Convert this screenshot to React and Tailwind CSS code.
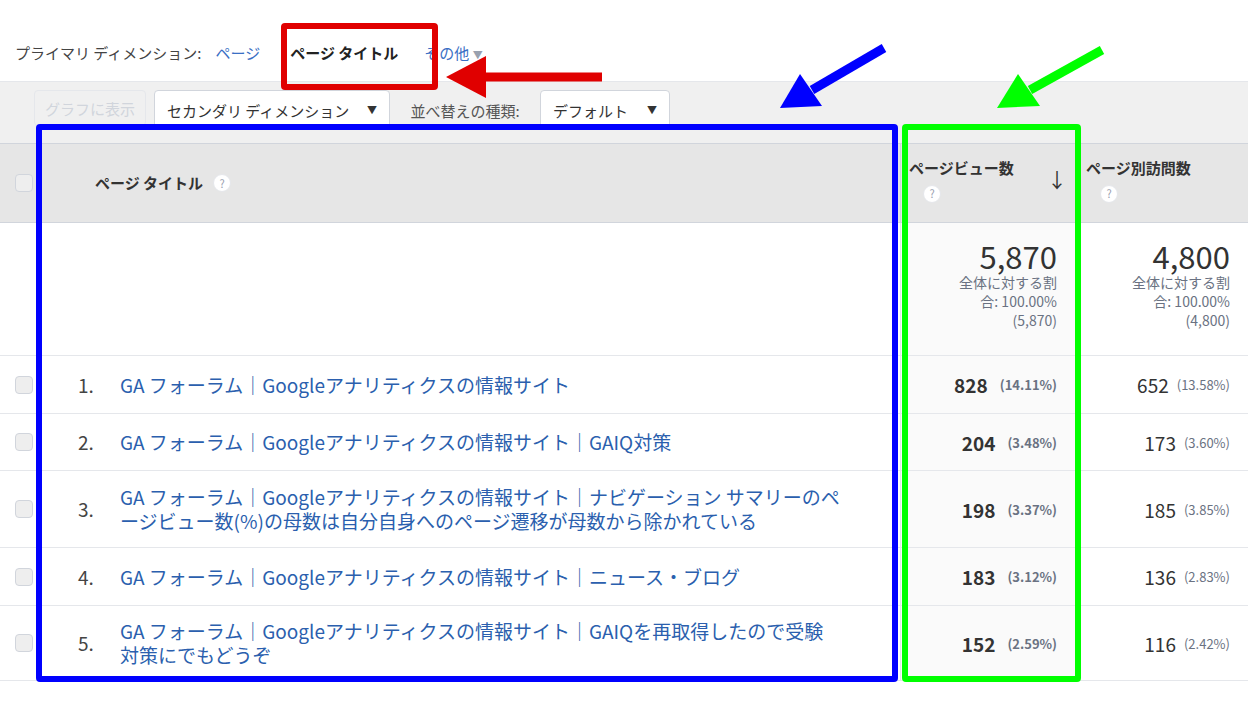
import React from 'react';

const rows = [
  { n: '1.', t: ['GA フォーラム｜Googleアナリティクスの情報サイト'], pv: '828', pp: '(14.11%)', uv: '652', up: '(13.58%)', h: 'h-[58px]' },
  { n: '2.', t: ['GA フォーラム｜Googleアナリティクスの情報サイト｜GAIQ対策'], pv: '204', pp: '(3.48%)', uv: '173', up: '(3.60%)', h: 'h-[57px]' },
  { n: '3.', t: ['GA フォーラム｜Googleアナリティクスの情報サイト｜ナビゲーション サマリーのペ', 'ージビュー数(%)の母数は自分自身へのページ遷移が母数から除かれている'], pv: '198', pp: '(3.37%)', uv: '185', up: '(3.85%)', h: 'h-[77px]' },
  { n: '4.', t: ['GA フォーラム｜Googleアナリティクスの情報サイト｜ニュース・ブログ'], pv: '183', pp: '(3.12%)', uv: '136', up: '(2.83%)', h: 'h-[58px]' },
  { n: '5.', t: ['GA フォーラム｜Googleアナリティクスの情報サイト｜GAIQを再取得したので受験', '対策にでもどうぞ'], pv: '152', pp: '(2.59%)', uv: '116', up: '(2.42%)', h: 'h-[75px]' },
];

const Help = () => (
  <span className="inline-flex w-[18px] h-[18px] rounded-full bg-white border border-gray-200 text-[11px] leading-none text-gray-400 items-center justify-center font-normal">?</span>
);

export default function App() {
  return (
    <div className="relative w-[1248px] h-[702px] bg-white text-[#333] leading-normal" style={{ fontFamily: '"Noto Sans CJK JP", "Liberation Sans", sans-serif' }}>
      <div className="pt-[23px]">
        <div className="h-[58px] flex items-center pl-[15px] text-[15px] leading-none">
          <span className="text-[#444]">プライマリ ディメンション:</span>
          <span className="text-[#3a6fc4] ml-[14px]">ページ</span>
          <span className="font-bold ml-[30px] text-[#222]">ページ タイトル</span>
          <span className="text-[#3a6fc4] ml-[26px]">その他 <span className="text-gray-400 text-[10px]">▼</span></span>
        </div>
        <div className="h-[62px] bg-[#f0f0f0] border-t border-gray-200 flex items-start pt-[8px] pl-[34px] text-[15px] leading-none">
          <div className="h-[36px] w-[112px] border border-gray-200 rounded flex items-center justify-center text-gray-300">グラフに表示</div>
          <div className="h-[40px] w-[236px] ml-[8px] px-[12px] bg-white border border-gray-300 rounded flex items-center justify-between">セカンダリ ディメンション <span className="text-[10px]">▼</span></div>
          <div className="h-[40px] w-[150px] flex items-center justify-center text-[#555]">並べ替えの種類:</div>
          <div className="h-[40px] w-[130px] px-[12px] bg-white border border-gray-300 rounded flex items-center justify-between">デフォルト <span className="text-[10px]">▼</span></div>
        </div>
        <div className="grid grid-cols-[45px_855px_180px_168px]">
          <div className="h-[80px] bg-[#e6e6e6] border-y border-gray-300 flex items-center pl-[15px]"><span className="w-[18px] h-[18px] border border-gray-300 bg-[#eee] rounded-sm" /></div>
          <div className="h-[80px] bg-[#e6e6e6] border-y border-gray-300 flex items-center pl-[50px] gap-[10px] text-[15px] font-bold">ページ タイトル <Help /></div>
          <div className="h-[80px] bg-[#e6e6e6] border-y border-x border-gray-300 pl-[8px] pr-[12px] pt-[14px] text-[15px] leading-[20px] font-bold relative">
            ページビュー数
            <div className="mt-[6px] ml-[14px] leading-none"><Help /></div>
            <span className="absolute right-[12px] top-[26px] text-[20px] font-normal">↓</span>
          </div>
          <div className="h-[80px] bg-[#e6e6e6] border-y border-gray-300 pl-[6px] pt-[14px] text-[15px] leading-[20px] font-bold">
            ページ別訪問数
            <div className="mt-[6px] ml-[14px] leading-none"><Help /></div>
          </div>

          <div className="h-[133px] border-b border-gray-200" />
          <div className="h-[133px] border-b border-gray-200" />
          <div className="h-[133px] border-b border-x border-gray-200 text-right pr-[22px] pt-[16px] bg-[#fafafa]">
            <div className="text-[31px] leading-[34px]">5,870</div>
            <div className="text-[14px] leading-[19px] text-gray-500">全体に対する割<br />合: 100.00%<br />(5,870)</div>
          </div>
          <div className="h-[133px] border-b border-gray-200 text-right pr-[18px] pt-[16px]">
            <div className="text-[31px] leading-[34px]">4,800</div>
            <div className="text-[14px] leading-[19px] text-gray-500">全体に対する割<br />合: 100.00%<br />(4,800)</div>
          </div>

          {rows.map((r) => (
            <React.Fragment key={r.n}>
              <div className={`${r.h} border-b border-gray-200 flex items-center pl-[15px]`}><span className="w-[18px] h-[18px] border border-gray-300 bg-[#eee] rounded-sm" /></div>
              <div className={`${r.h} border-b border-gray-200 flex items-center text-[19px] leading-[24px]`}>
                <span className="w-[75px] pl-[33px] text-[#444] shrink-0">{r.n}</span>
                <span className="text-[#2b5fae]">{r.t.map((l) => <div key={l}>{l}</div>)}</span>
              </div>
              <div className={`${r.h} border-b border-x border-gray-200 bg-[#fafafa] flex items-center justify-end pr-[22px] gap-[12px] leading-none`}>
                <span className="text-[19px] font-bold">{r.pv}</span>
                <span className="text-[13px] text-gray-500 font-bold">{r.pp}</span>
              </div>
              <div className={`${r.h} border-b border-gray-200 flex items-center justify-end pr-[18px] gap-[8px] leading-none`}>
                <span className="text-[19px]">{r.uv}</span>
                <span className="text-[13px] text-gray-500">{r.up}</span>
              </div>
            </React.Fragment>
          ))}
        </div>
      </div>

      {/* annotations */}
      <div className="absolute left-[281px] top-[23px] w-[157px] h-[67px] border-[6px] border-[#e00000] rounded" />
      <div className="absolute left-[36px] top-[124px] w-[862px] h-[558px] border-[6px] border-[#0000ff] rounded" />
      <div className="absolute left-[902px] top-[124px] w-[179px] h-[558px] border-[6px] border-[#00ff00] rounded" />
      <svg className="absolute left-0 top-0" width="1248" height="702">
        <line x1="602" y1="77" x2="480" y2="77" stroke="#e00000" strokeWidth="9" />
        <polygon points="446,77 486,56 486,98" fill="#e00000" />
        <line x1="884" y1="48" x2="812" y2="90" stroke="#0000ff" strokeWidth="9" />
        <polygon points="780,108 800,74 822,106" fill="#0000ff" />
        <line x1="1102" y1="50" x2="1030" y2="90" stroke="#00ff00" strokeWidth="9" />
        <polygon points="997,108 1018,74 1040,106" fill="#00ff00" />
      </svg>
    </div>
  );
}
